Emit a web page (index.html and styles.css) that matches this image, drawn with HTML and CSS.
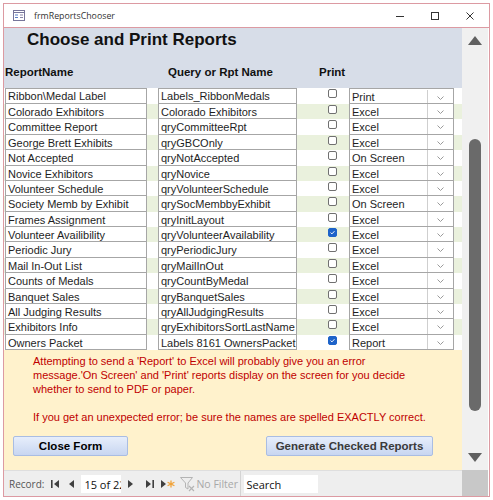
FILE: index.html
```html
<!DOCTYPE html>
<html lang="en">
<head>
  <meta charset="UTF-8">
  <title>frmReportsChooser</title>
  <link rel="stylesheet" href="styles.css">
</head>
<body>
  <div class="window">
    <div class="titlebar">
      <svg class="app-icon" width="12" height="11" viewBox="0 0 12 11">
        <rect x="0.5" y="0.5" width="11" height="10" fill="#fff" stroke="#77759a"/>
        <line x1="0.5" y1="2.5" x2="11.5" y2="2.5" stroke="#77759a"/>
        <line x1="2" y1="5" x2="5" y2="5" stroke="#5b7fc4"/>
        <line x1="7" y1="5" x2="10" y2="5" stroke="#8a86a8"/>
        <line x1="2" y1="7.5" x2="5" y2="7.5" stroke="#5b7fc4"/>
        <line x1="7" y1="7.5" x2="10" y2="7.5" stroke="#8a86a8"/>
      </svg>
      <span class="title">frmReportsChooser</span>
      <div class="controls">
        <span class="ctl">
          <svg width="8" height="8" viewBox="0 0 8 8"><line x1="0" y1="4.5" x2="8" y2="4.5" stroke="#333"/></svg>
        </span>
        <span class="ctl">
          <svg width="8" height="8" viewBox="0 0 8 8"><rect x="0.5" y="0.5" width="7" height="7" fill="none" stroke="#333"/></svg>
        </span>
        <span class="ctl">
          <svg width="8" height="8" viewBox="0 0 8 8"><path d="M0.5 0.5 L7.5 7.5 M7.5 0.5 L0.5 7.5" stroke="#333" stroke-width="1"/></svg>
        </span>
      </div>
    </div>

    <div class="client">
      <div class="form">
        <div class="form-header">
          <h1>Choose and Print Reports</h1>
          <div class="col-heads">
            <span>ReportName</span>
            <span>Query or Rpt Name</span>
            <span>Print</span>
          </div>
        </div>

        <div class="detail" id="detail"></div>

        <div class="form-footer">
          <p class="note">Attempting to send a 'Report' to Excel will probably give you an error message.'On Screen' and 'Print' reports display on the screen for you decide whether to send to PDF or paper.</p>
          <p class="note second">If you get an unexpected error; be sure the names are spelled EXACTLY correct.</p>
          <div class="buttons">
            <button class="btn btn-close">Close Form</button>
            <button class="btn btn-generate">Generate Checked Reports</button>
          </div>
        </div>
      </div>

      <div class="vscroll">
        <svg class="arrow up" width="14" height="9" viewBox="0 0 14 9"><polygon points="7,0 14,9 0,9" fill="#606060"/></svg>
        <div class="thumb"></div>
        <svg class="arrow down" width="14" height="9" viewBox="0 0 14 9"><polygon points="0,0 14,0 7,9" fill="#606060"/></svg>
      </div>
      <div class="edge"></div>

      <div class="navbar">
        <span class="rec-label">Record:</span>
        <svg class="nav-first" width="8" height="8" viewBox="0 0 8 8"><rect x="0" y="0" width="1.6" height="8" fill="#404040"/><polygon points="8,0 3,4 8,8" fill="#404040"/></svg>
        <svg class="nav-prev" width="5" height="8" viewBox="0 0 5 8"><polygon points="5,0 0,4 5,8" fill="#404040"/></svg>
        <span class="rec-box">15 of 22</span>
        <svg class="nav-next" width="5" height="8" viewBox="0 0 5 8"><polygon points="0,0 5,4 0,8" fill="#404040"/></svg>
        <svg class="nav-last" width="8" height="8" viewBox="0 0 8 8"><polygon points="0,0 5,4 0,8" fill="#404040"/><rect x="6.4" y="0" width="1.6" height="8" fill="#404040"/></svg>
        <svg class="nav-new" width="14" height="8" viewBox="0 0 14 8">
          <polygon points="0,0 5,4 0,8" fill="#404040"/>
          <path d="M10 0.5 V7.5 M6.6 2.2 L13.4 5.8 M6.6 5.8 L13.4 2.2" stroke="#f0a33a" stroke-width="1.3"/>
        </svg>
        <span class="filter">
          <svg width="15" height="16" viewBox="0 0 15 16">
            <path d="M0.5 1.5 H12.5 L8 7 V13 L5.5 11.5 V7 Z" fill="none" stroke="#b4b4b4"/>
            <path d="M9 10 L14 15 M14 10 L9 15" stroke="#b4b4b4" stroke-width="1.2"/>
          </svg>
          No Filter
        </span>
        <span class="search">Search</span>
      </div>
      <div class="corner"></div>
    </div>
  </div>

  <script>
    const reports = [
      ["Ribbon\\Medal Label", "Labels_RibbonMedals", false, "Print"],
      ["Colorado Exhibitors", "Colorado Exhibitors", false, "Excel"],
      ["Committee Report", "qryCommitteeRpt", false, "Excel"],
      ["George Brett Exhibits", "qryGBCOnly", false, "Excel"],
      ["Not Accepted", "qryNotAccepted", false, "On Screen"],
      ["Novice Exhibitors", "qryNovice", false, "Excel"],
      ["Volunteer Schedule", "qryVolunteerSchedule", false, "Excel"],
      ["Society Memb by Exhibit", "qrySocMembbyExhibit", false, "On Screen"],
      ["Frames Assignment", "qryInitLayout", false, "Excel"],
      ["Volunteer Availibility", "qryVolunteerAvailability", true, "Excel"],
      ["Periodic Jury", "qryPeriodicJury", false, "Excel"],
      ["Mail In-Out List", "qryMailInOut", false, "Excel"],
      ["Counts of Medals", "qryCountByMedal", false, "Excel"],
      ["Banquet Sales", "qryBanquetSales", false, "Excel"],
      ["All Judging Results", "qryAllJudgingResults", false, "Excel"],
      ["Exhibitors Info", "qryExhibitorsSortLastName", false, "Excel"],
      ["Owners Packet", "Labels 8161 OwnersPacket", true, "Report"]
    ];

    const tick = '<svg width="9" height="9" viewBox="0 0 9 9"><polyline points="2,4.6 3.8,6.3 7,2.8" fill="none" stroke="#fff" stroke-width="1.2"/></svg>';
    const chevron = '<svg width="7" height="4" viewBox="0 0 7 4"><polyline points="0.5,0.5 3.5,3.5 6.5,0.5" fill="none" stroke="#9a9a9a"/></svg>';

    const detail = document.getElementById("detail");
    reports.forEach(r => {
      const row = document.createElement("div");
      row.className = "row";
      row.innerHTML = `
        <span class="cell name">${r[0]}</span>
        <span class="cell query">${r[1]}</span>
        <span class="chk${r[2] ? " checked" : ""}">${r[2] ? tick : ""}</span>
        <span class="cell combo"><span class="val">${r[3]}</span><span class="drop">${chevron}</span></span>
      `;
      detail.appendChild(row);
    });
  </script>
</body>
</html>
```

FILE: styles.css
```css
body {
  margin: 0;
  background: #fff;
  font-family: 'Liberation Sans', Arial, sans-serif;
  color: #222;
}
.window {
  margin: 3px 0 0 3px;
  width: 487px;
  height: 494px;
  box-sizing: border-box;
  border: 1px solid #dc9aa2;
  display: flex;
  flex-direction: column;
}
.titlebar {
  height: 23px;
  flex-shrink: 0;
  border-bottom: 1px solid #dc9aa2;
  display: flex;
  align-items: center;
  padding-left: 9px;
}
.app-icon {
  margin-right: 9px;
}
.title {
  font-family: 'Open Sans', sans-serif;
  font-size: 8.8px;
  color: #333;
}
.controls {
  margin-left: auto;
  margin-right: 2px;
  display: flex;
}
.ctl {
  width: 35px;
  height: 23px;
  display: flex;
  align-items: center;
  justify-content: center;
}

.client {
  display: grid;
  grid-template-columns: 458px 26px 1px;
  grid-template-rows: 442px 26px;
}
.form {
  display: flex;
  flex-direction: column;
}
.form-header {
  height: 60px;
  background: #d7dde8;
}
.form-header h1 {
  margin: 0;
  padding: 2px 0 0 23px;
  font-size: 17px;
  line-height: 20px;
  color: #111;
}
.col-heads {
  display: grid;
  grid-template-columns: 163px 151px auto;
  margin-top: 15px;
  padding-left: 1px;
  font-size: 11.5px;
  line-height: 14px;
  font-weight: bold;
  color: #111;
}

.detail {
  height: 262px;
  display: grid;
  grid-template-rows: repeat(17, 1fr);
}
.row {
  display: grid;
  grid-template-columns: 1px 142px 11px 139px 31px 9px 12px 105px 8px;
  background: #fff;
}
.row:nth-child(even) {
  background: #eaf1dd;
}
.cell {
  box-sizing: border-box;
  height: 100%;
  background: #fff;
  border: 1px solid #a6a6a6;
  border-top: none;
  font-size: 11px;
  line-height: 12px;
  padding: 2px 2px 0;
  white-space: nowrap;
  overflow: hidden;
  color: #1e1e1e;
}
.row:first-child .cell {
  border-top: 1px solid #a6a6a6;
  padding-top: 1px;
}
.name {
  grid-column: 2;
}
.query {
  grid-column: 4;
}
.chk {
  grid-column: 6;
  align-self: start;
  margin-top: 1px;
  width: 9px;
  height: 9px;
  box-sizing: border-box;
  border: 1px solid #707070;
  border-radius: 2px;
  background: #fff;
  display: flex;
  align-items: center;
  justify-content: center;
}
.chk.checked {
  background: #1d63c9;
  border-color: #1d63c9;
}
.combo {
  grid-column: 8;
  display: flex;
  padding: 0;
}
.combo .val {
  flex: 1;
  padding: 2px 2px 0;
}
.row:first-child .combo .val {
  padding-top: 1px;
}
.combo .drop {
  width: 26px;
  border-left: 1px solid #cfcfcf;
  display: flex;
  justify-content: center;
  padding-top: 6px;
  box-sizing: border-box;
}

.form-footer {
  flex: 1;
  background: #fff2cc;
  padding-top: 4px;
}
.note {
  margin: 0 0 0 29px;
  width: 397px;
  font-size: 11px;
  line-height: 14px;
  color: #c00000;
}
.note.second {
  margin-top: 14px;
}
.buttons {
  display: flex;
  margin-top: 12px;
  padding-left: 9px;
}
.btn {
  height: 20px;
  padding: 0;
  border: 1px solid #a9bde3;
  border-radius: 2px;
  background: linear-gradient(#e7eefb, #c8d6f1);
  font-family: 'Liberation Sans', Arial, sans-serif;
  font-size: 11.5px;
  font-weight: bold;
}
.btn-close {
  width: 115px;
  color: #000;
}
.btn-generate {
  width: 167px;
  margin-left: 138px;
  color: #3a3a3a;
}

.vscroll {
  grid-row: 1;
  grid-column: 2;
  background: #f0f0f0;
  display: flex;
  flex-direction: column;
  align-items: center;
}
.arrow.up {
  margin-top: 8px;
}
.thumb {
  width: 12px;
  height: 272px;
  margin-top: 94px;
  border-radius: 6px;
  background: #6a6a6a;
}
.arrow.down {
  margin-top: 42px;
}
.edge {
  grid-row: 1 / 3;
  grid-column: 3;
  background: #fff;
}

.navbar {
  grid-row: 2;
  grid-column: 1;
  background: #eeeeee;
  border-top: 1px solid #dedede;
  display: flex;
  align-items: center;
  padding-left: 5px;
  font-family: 'Open Sans', sans-serif;
  font-size: 10px;
  white-space: nowrap;
  overflow: hidden;
}
.rec-label {
  color: #555;
}
.nav-first {
  margin-left: 7px;
}
.nav-prev {
  margin-left: 10px;
}
.rec-box {
  margin-left: 7px;
  width: 40px;
  height: 18px;
  box-sizing: border-box;
  background: #fff;
  padding: 2px 0 0 3px;
  font-size: 11px;
  color: #111;
  overflow: hidden;
}
.nav-next {
  margin-left: 7px;
}
.nav-last {
  margin-left: 13px;
}
.nav-new {
  margin-left: 7px;
}
.filter {
  margin-left: 5px;
  width: 60px;
  height: 26px;
  border-right: 1px solid #d4d4d4;
  display: flex;
  align-items: center;
  color: #a8a8a8;
  font-size: 10.5px;
  overflow: hidden;
}
.filter svg {
  margin-right: 1px;
  flex-shrink: 0;
}
.search {
  margin-left: 3px;
  width: 74px;
  height: 18px;
  box-sizing: border-box;
  background: #fff;
  padding: 2px 0 0 2px;
  font-size: 11px;
  color: #111;
}
.corner {
  grid-row: 2;
  grid-column: 2;
  background: #c8c8c8;
}
```
